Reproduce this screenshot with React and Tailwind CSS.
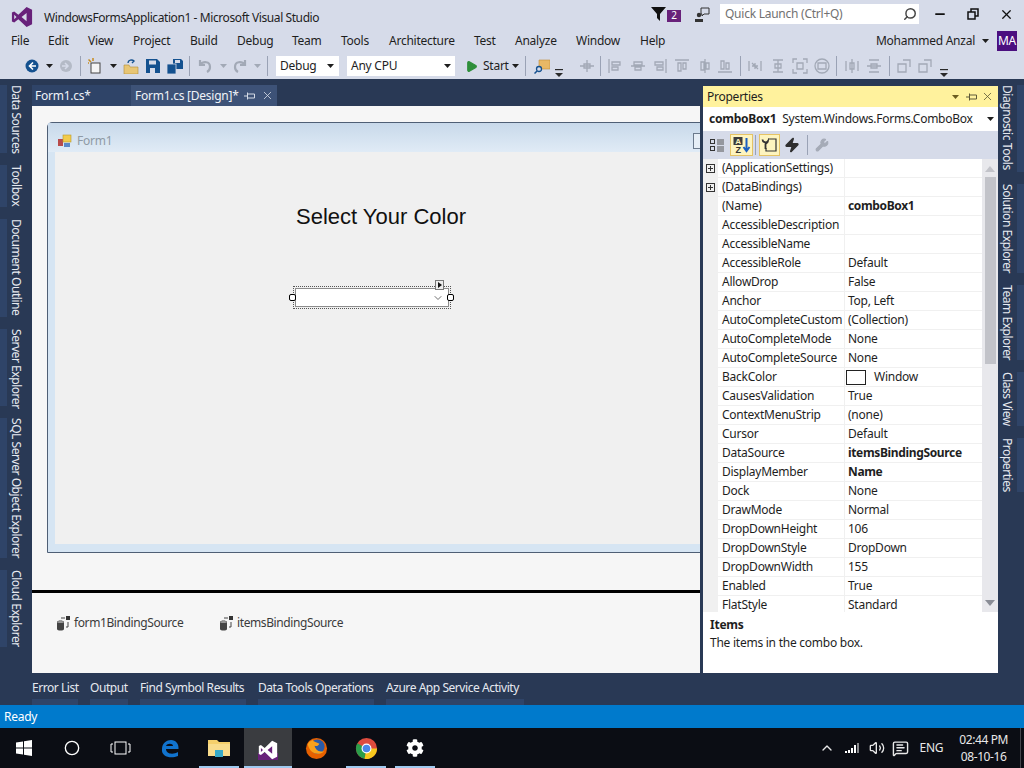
import React from "react";
import { ChevronDown, Search, Minus, X, Circle, Volume2, ChevronUp, MessageSquareText, Play, Zap, Wrench } from "lucide-react";
import { FaCog } from "react-icons/fa";

function VsLogo({ size = 24, fill = "#68217a", hole = "#d6dbe9" }) {
  return (
    <svg width={size} height={size} viewBox="0 0 24 24">
      <path d="M17 1 L23 4 V20 L17 23 L8 14.5 L3.5 18 L1 16.8 V7.2 L3.5 6 L8 9.5 Z" fill={fill} />
      <path d="M17 7.5 L11.5 12 L17 16.5 Z M3.5 9.5 V14.5 L6 12 Z" fill={hole} />
    </svg>
  );
}

function Caret({ c = "#1e1e1e" }) {
  return (
    <svg width="7" height="4" viewBox="0 0 7 4" className="block"><path d="M0 0H7L3.5 4Z" fill={c} /></svg>
  );
}

function PinIcon({ c }) {
  return (
    <svg width="11" height="10" viewBox="0 0 11 10" fill="none" stroke={c} className="block">
      <path d="M0 5H4M3.5 1.5V8.5M3.5 3H10.5V7H3.5" />
    </svg>
  );
}

function Overflow() {
  return (
    <svg width="8" height="9" viewBox="0 0 8 9" className="mt-[12px] block">
      <rect x="0" y="1" width="8" height="1.2" fill="#2a2a2a" />
      <path d="M0 5H8L4 9Z" fill="#2a2a2a" />
    </svg>
  );
}

function Grip() {
  return (
    <div className="h-[20px] w-[5px] bg-[radial-gradient(#9aa0ad_40%,transparent_45%)] bg-[length:2px_2px]" />
  );
}

function Sep() {
  return <div className="h-[20px] w-px bg-[#9aa2b5]" />;
}

function GrayGlyph({ d }) {
  return (
    <svg width="16" height="16" viewBox="0 0 16 16" fill="none" stroke="#a2a9b6" strokeWidth="1.3" className="block">
      <path d={d} />
    </svg>
  );
}

const alignIcons = [
  ["ml-[6px]", "M2 1V15M5 4H13V7H5ZM5 9H11V12H5Z"],
  ["ml-[7px]", "M1 8H15M4 4H12V7H4ZM5 9H11V12H5Z"],
  ["ml-[6px]", "M14 1V15M3 4H11V7H3ZM5 9H11V12H5Z"],
  ["ml-[6px]", "M1 2H15M4 5V13H7V5ZM9 5V11H12V5Z"],
  ["ml-[7px]", "M8 1V15M4 4V12H7V4ZM9 5V11H12V5Z"],
  ["ml-[4px]", "M1 14H15M4 3V11H7V3ZM9 5V11H12V5Z"],
];

const menus = [
  ["File", "w-[37px]"], ["Edit", "w-[40px]"], ["View", "w-[45px]"], ["Project", "w-[57px]"], ["Build", "w-[47px]"],
  ["Debug", "w-[55px]"], ["Team", "w-[49px]"], ["Tools", "w-[48px]"], ["Architecture", "w-[85px]"], ["Test", "w-[41px]"],
  ["Analyze", "w-[61px]"], ["Window", "w-[64px]"], ["Help", "w-[40px]"],
];

const rows = [
  ["(ApplicationSettings)", "", "plus"],
  ["(DataBindings)", "", "plus"],
  ["(Name)", "comboBox1", "bold"],
  ["AccessibleDescription", ""],
  ["AccessibleName", ""],
  ["AccessibleRole", "Default"],
  ["AllowDrop", "False"],
  ["Anchor", "Top, Left"],
  ["AutoCompleteCustom", "(Collection)"],
  ["AutoCompleteMode", "None"],
  ["AutoCompleteSource", "None"],
  ["BackColor", "Window", "swatch"],
  ["CausesValidation", "True"],
  ["ContextMenuStrip", "(none)"],
  ["Cursor", "Default"],
  ["DataSource", "itemsBindingSource", "bold"],
  ["DisplayMember", "Name", "bold"],
  ["Dock", "None"],
  ["DrawMode", "Normal"],
  ["DropDownHeight", "106"],
  ["DropDownStyle", "DropDown"],
  ["DropDownWidth", "155"],
  ["Enabled", "True"],
  ["FlatStyle", "Standard"],
];

function VTab({ label, h, side }) {
  return (
    <div className={`flex ${h} ${side === "left" ? "flex-row" : "flex-row-reverse"}`}>
      <div className="h-full w-[7px] shrink-0 bg-[#2f4468]" />
      <div className={`h-full whitespace-nowrap text-[12px] tracking-[-0.45px] text-[#e6e9f0] [writing-mode:vertical-rl] ${side === "left" ? "w-[18px] leading-[18px]" : "w-[19px] leading-[19px]"}`}>
        {label}
      </div>
    </div>
  );
}

function DbIcon() {
  return (
    <svg width="15" height="15" viewBox="0 0 15 15" className="block">
      <rect x="10" y="0" width="4" height="4" fill="#333" />
      <path d="M5 2H9M12 6V11H10" stroke="#444" fill="none" />
      <path d="M1 6C1 4 8 4 8 6V13C8 15 1 15 1 13Z" fill="#444" />
      <ellipse cx="4.5" cy="6" rx="3.5" ry="1" fill="#999" />
    </svg>
  );
}

function PropToolbarIcons() {
  return (
    <div className="flex h-[28px] items-center bg-[#d6dbe9] pl-[3px]">
      <div className="flex h-[22px] w-[22px] items-center justify-center">
        <svg width="16" height="16" viewBox="0 0 16 16" fill="none" stroke="#333" strokeWidth="1">
          <rect x="1.5" y="2.5" width="4" height="4" /><rect x="1.5" y="9.5" width="4" height="4" />
          <path d="M8 3H15M8 5H15M8 7H15M8 10H15M8 12H15M8 14H15" stroke="#555" />
        </svg>
      </div>
      <div className="ml-[2px] flex h-[22px] w-[23px] items-center justify-center border border-[#e5c365] bg-[#fdf4bf]">
        <svg width="18" height="17" viewBox="0 0 18 17">
          <rect x="0.5" y="0" width="9" height="8" fill="#3c3c3c" />
          <text x="5" y="7" textAnchor="middle" fontSize="8" fontWeight="700" fill="#fdf4bf" fontFamily="Liberation Sans, sans-serif">A</text>
          <text x="5" y="16" textAnchor="middle" fontSize="9" fontWeight="700" fill="#333" fontFamily="Liberation Sans, sans-serif">Z</text>
          <path d="M13.5 1V13M10.5 10L13.5 14L16.5 10" stroke="#1b5fc1" strokeWidth="2" fill="none" />
        </svg>
      </div>
      <div className="ml-[2px] h-[20px] w-px bg-[#9aa2b5]" />
      <div className="ml-[3px] flex h-[22px] w-[21px] items-center justify-center border border-[#e5c365] bg-[#fdf4bf]">
        <svg width="17" height="16" viewBox="0 0 17 16" fill="none" stroke="#333" strokeWidth="1.2">
          <path d="M7 2H15V14H5V11" />
          <path d="M1.5 2.5A3 3 0 0 0 7 4C7 6 5 6 4.5 7V12" strokeWidth="1.8" />
        </svg>
      </div>
      <Zap size={16} className="ml-[4px] fill-[#2f2f2f] text-[#2f2f2f]" />
      <div className="ml-[7px] h-[20px] w-px bg-[#9aa2b5]" />
      <Wrench size={14} className="ml-[7px] fill-[#a5abb7] text-[#a5abb7]" />
    </div>
  );
}

function Properties() {
  return (
    <div className="mt-[7px] flex h-[587px] w-[295px] shrink-0 flex-col overflow-hidden bg-white">
      <div className="flex h-[21px] items-center bg-[#fff29d] pl-[4px] pr-[4px] text-[#1e1e1e]">
        <span className="flex-1 text-[12px]">Properties</span>
        <Caret c="#6b5d20" />
        <div className="ml-[7px]"><PinIcon c="#5e5a38" /></div>
        <X size={13} strokeWidth={1.5} className="ml-[4px] text-[#5e5a38]" />
      </div>
      <div className="flex h-[24px] items-center pl-[6px] pr-[4px] text-[12px] text-[#1e1e1e]">
        <span className="font-bold">comboBox1</span>
        <span className="ml-[6px] flex-1">System.Windows.Forms.ComboBox</span>
        <Caret />
      </div>
      <PropToolbarIcons />
      <div className="flex h-[453px] overflow-hidden">
        <div className="w-[279px] shrink-0">
          {rows.map(([name, value, kind]) => (
            <div key={name} className="flex h-[19px] items-center text-[12px] text-[#1e1e1e]">
              <div className="flex h-full w-[15px] shrink-0 items-center justify-center bg-[#f0f0f0]">
                {kind === "plus" && (
                  <svg width="9" height="9" viewBox="0 0 9 9" fill="none" stroke="#333">
                    <rect x="0.5" y="0.5" width="8" height="8" /><path d="M2 4.5H7M4.5 2V7" />
                  </svg>
                )}
              </div>
              <div className="flex h-full w-[127px] shrink-0 items-center overflow-hidden whitespace-nowrap border-b border-r border-[#f0f0f0] pl-[4px]">
                {name}
              </div>
              <div className={`flex h-full flex-1 items-center whitespace-nowrap border-b border-[#f0f0f0] pl-[3px] ${kind === "bold" ? "font-bold tracking-[-0.35px]" : ""}`}>
                {kind === "swatch" && <span className="ml-[-2px] mr-[8px] h-[15px] w-[20px] border border-[#222] bg-white" />}
                {value}
              </div>
            </div>
          ))}
        </div>
        <div className="flex w-[16px] flex-col items-center bg-[#e8e8ec]">
          <svg width="10" height="6" viewBox="0 0 10 6" className="mt-[7px]"><path d="M0 6L5 0L10 6Z" fill="#c2c3c9" /></svg>
          <div className="mt-[5px] h-[187px] w-[11px] bg-[#c2c3c9]" />
          <div className="flex-1" />
          <svg width="10" height="6" viewBox="0 0 10 6" className="mb-[6px]"><path d="M0 0L5 6L10 0Z" fill="#8a8d96" /></svg>
        </div>
      </div>
      <div className="flex-1 pl-[7px] pt-[4px] text-[12px] text-[#1e1e1e]">
        <div className="font-bold leading-[18px]">Items</div>
        <div className="leading-[18px]">The items in the combo box.</div>
      </div>
    </div>
  );
}

function Designer() {
  return (
    <div className="flex h-[567px] w-[668px] flex-col overflow-hidden bg-[#f6f6f6]">
      <div className="h-[484px] overflow-hidden pl-[15px] pt-[16px]">
        <div className="h-[431px] w-[720px] rounded-t-[5px] border border-[#4f5f75] bg-[#d6e5f3]">
          <div className="flex h-[29px] items-center justify-between bg-gradient-to-b from-[#c8d9ea] to-[#e0ebf6] pl-[10px] pt-[6px]">
            <div className="flex items-center text-[12px] text-[#8f9aa5]">
              <svg width="15" height="14" viewBox="0 0 15 14">
                <rect x="0" y="5" width="5" height="7" fill="#b84a4a" />
                <rect x="5" y="1" width="8" height="7" fill="#f2cb4c" stroke="#b99a2b" strokeWidth=".6" />
                <rect x="6" y="9" width="6" height="4" fill="#5b88c7" />
              </svg>
              <span className="ml-[4px]">Form1</span>
            </div>
            <div className="mr-[53px] h-[16px] w-[20px] border border-[#6b7a8c] bg-[#e6eef6]" />
          </div>
          <div className="mx-[7px] flex h-[392px] flex-col bg-[#f0f0f0] pl-[241px]">
            <div className="mt-[52px] text-[22px] leading-[26px] tracking-normal text-[#111] [font-family:'Liberation_Sans',sans-serif]">Select Your Color</div>
            <div className="relative ml-[-3px] mt-[56px] h-[23px] w-[158px] border border-dotted border-[#555] p-px">
              <div className="flex h-[19px] w-full items-center justify-end border border-[#8c8c8c] bg-white pr-[4px]">
                <ChevronDown size={12} className="text-[#707070]" />
              </div>
              <div className="absolute left-[-5px] top-[7px] h-[7px] w-[7px] rounded-[2px] border border-black bg-white" />
              <div className="absolute right-[-4px] top-[7px] h-[7px] w-[7px] rounded-[2px] border border-black bg-white" />
              <div className="absolute right-[6px] top-[-7px] flex h-[10px] w-[9px] items-center justify-center border border-[#777] bg-[#ededed]">
                <svg width="4" height="6" viewBox="0 0 4 6"><path d="M0 0L4 3L0 6Z" fill="#111" /></svg>
              </div>
            </div>
          </div>
        </div>
      </div>
      <div className="h-[3px] bg-black" />
      <div className="flex flex-1 items-start pl-[24px] pt-[21px] text-[12px] tracking-[-0.4px] text-[#3b3b3b]">
        <div className="flex w-[163px] items-center"><DbIcon /><span className="ml-[3px]">form1BindingSource</span></div>
        <div className="flex items-center"><DbIcon /><span className="ml-[3px]">itemsBindingSource</span></div>
      </div>
    </div>
  );
}

function BottomTab({ label, w }) {
  return (
    <div className={`flex ${w} flex-col`}>
      <div className="flex h-[26px] items-center whitespace-nowrap pt-[3px] text-[12px] tracking-[-0.45px] text-[#e6e9f0]">{label}</div>
      <div className="h-[6px] bg-[#2f4468]" />
    </div>
  );
}

function Firefox() {
  return (
    <svg width="23" height="23" viewBox="0 0 24 24">
      <circle cx="12" cy="12" r="11" fill="#e66000" />
      <circle cx="13" cy="10" r="7.5" fill="#2a5ba8" />
      <path d="M3 8C5 17 14 20 20 15C16 16 11 14 10 9C12 10 14 9 15 7C12 5 9 5 8 3C5 4 3 6 3 8Z" fill="#f9a11b" />
    </svg>
  );
}

function Chrome() {
  return (
    <svg width="23" height="23" viewBox="0 0 24 24">
      <circle cx="12" cy="12" r="11" fill="#dd4b3e" />
      <path d="M12 12L2.5 6.5A11 11 0 0 0 10 22.8Z" fill="#2a9d4a" />
      <path d="M12 12H23A11 11 0 0 1 10 22.8Z" fill="#f7c81e" />
      <circle cx="12" cy="12" r="5.2" fill="#fff" />
      <circle cx="12" cy="12" r="4" fill="#4a87e8" />
    </svg>
  );
}

function TaskItem({ children, active, underline, cls = "" }) {
  return (
    <div className={`relative flex h-full w-[48px] shrink-0 items-center justify-center ${cls} ${active ? "bg-[#3a3c40]" : ""}`}>
      {children}
      {underline && <div className={`absolute bottom-0 h-[2px] bg-[#9fc9ef] ${active ? "w-full" : "w-[40px]"}`} />}
    </div>
  );
}

export default function App() {
  return (
    <div className="flex h-[768px] w-[1024px] flex-col overflow-hidden bg-[#293955] text-[12px] tracking-[-0.25px] [font-family:'Noto_Sans',sans-serif]">
      <div className="flex h-[53px] flex-col bg-[#d6dbe9] text-[#1e1e1e]">
        <div className="flex h-[28px] items-center">
          <div className="ml-[11px] mt-[6px]"><VsLogo size={22} /></div>
          <span className="ml-[11px] mt-[6px] flex-1 whitespace-nowrap pt-px text-[12px] tracking-[-0.41px]">WindowsFormsApplication1 - Microsoft Visual Studio</span>
          <svg width="15" height="14" viewBox="0 0 15 14"><path d="M0 0H15L9 7V14L6 11V7Z" fill="#111" /></svg>
          <div className="ml-px mt-[3px] flex h-[12px] w-[14px] items-center justify-center bg-[#68217a] text-[10px] text-white">2</div>
          <svg width="15" height="15" viewBox="0 0 15 15" className="ml-[14px]">
            <circle cx="4" cy="8" r="2.2" fill="#333" /><path d="M0 15V12H8V15Z" fill="#333" />
            <path d="M6 1H14V7H9L7 9V7H6Z" fill="none" stroke="#333" />
          </svg>
          <div className="ml-[10px] flex h-[20px] w-[199px] items-center justify-between bg-white pl-[5px] pr-[2px] text-[12px] text-[#717171]">
            <span>Quick Launch (Ctrl+Q)</span>
            <Search size={14} strokeWidth={2.5} className="-scale-x-100 text-[#444]" />
          </div>
          <div className="flex w-[105px] items-center pl-[14px]">
            <Minus size={14} strokeWidth={3} className="text-[#111]" />
            <svg width="12" height="12" viewBox="0 0 12 12" fill="none" stroke="#111" strokeWidth="1.5" className="ml-[20px]">
              <rect x="1" y="4" width="7" height="7" /><path d="M4 4V1H11V8H8" />
            </svg>
            <X size={15} strokeWidth={2} className="ml-[20px] text-[#111]" />
          </div>
        </div>
        <div className="flex h-[25px] items-center pl-[11px] pt-px text-[12px]">
          {menus.map(([m, w]) => <div key={m} className={`${w} whitespace-nowrap`}>{m}</div>)}
          <div className="flex-1" />
          <span className="whitespace-nowrap">Mohammed Anzal</span>
          <div className="ml-[7px]"><Caret /></div>
          <div className="ml-[8px] mr-[7px] flex h-[20px] w-[20px] items-center justify-center bg-[#4b0f7f] text-[12px] text-white">MA</div>
        </div>
      </div>

      <div className="flex h-[26px] items-center bg-[#d6dbe9] pl-[12px] text-[12px] text-[#1e1e1e]">
        <Grip />
        <svg width="14" height="14" viewBox="0 0 14 14" className="ml-[8px]">
          <circle cx="7" cy="7" r="6.5" fill="#14518f" />
          <path d="M8 3.5L4.5 7L8 10.5M5 7H11" stroke="#fff" strokeWidth="1.6" fill="none" />
        </svg>
        <div className="ml-[7px]"><Caret /></div>
        <svg width="14" height="14" viewBox="0 0 14 14" className="ml-[6px]">
          <circle cx="7" cy="7" r="6" fill="#b4bac6" />
          <path d="M6 4L9 7L6 10M3 7H9" stroke="#d6dbe9" strokeWidth="1.5" fill="none" />
        </svg>
        <div className="ml-[7px]"><Sep /></div>
        <svg width="16" height="16" viewBox="0 0 16 16" className="ml-[7px]">
          <rect x="3" y="5" width="9" height="10" fill="#f5f5f5" stroke="#444" />
          <path d="M3 4L0.5 1.5M5 3V0M1 5H0" stroke="#c78a1c" strokeWidth="1.5" />
        </svg>
        <div className="ml-[6px]"><Caret /></div>
        <svg width="16" height="15" viewBox="0 0 16 15" className="ml-[6px]">
          <path d="M1 6H6L7 8H15V15H1Z" fill="#e8c675" stroke="#b48f35" strokeWidth=".6" />
          <path d="M5 4C5 1 9 0 11 2L9 4" stroke="#14518f" strokeWidth="1.4" fill="none" />
        </svg>
        <svg width="14" height="14" viewBox="0 0 14 14" className="ml-[7px]">
          <path d="M0 0H11L14 3V14H0Z" fill="#14518f" /><rect x="3" y="1.5" width="7" height="4" fill="#d6dbe9" /><rect x="4" y="9" width="5" height="5" fill="#d6dbe9" />
        </svg>
        <svg width="16" height="15" viewBox="0 0 16 15" className="ml-[7px]">
          <path d="M6 0H14L16 2V10H6Z" fill="#14518f" /><rect x="0" y="5" width="9" height="10" fill="#14518f" stroke="#d6dbe9" strokeWidth=".8" /><rect x="8" y="1" width="5" height="3" fill="#d6dbe9" />
        </svg>
        <div className="ml-[6px]"><Sep /></div>
        <svg width="16" height="16" viewBox="0 0 16 16" fill="none" stroke="#a2a9b6" strokeWidth="2.2" className="ml-[7px]">
          <path d="M3 2V7H8M3 7C6 3 13 3 13 9C13 11 12 13 10 14" />
        </svg>
        <div className="ml-[7px]"><Caret c="#a2a9b6" /></div>
        <svg width="16" height="16" viewBox="0 0 16 16" fill="none" stroke="#a2a9b6" strokeWidth="2.2" className="ml-[5px] -scale-x-100">
          <path d="M3 2V7H8M3 7C6 3 13 3 13 9C13 11 12 13 10 14" />
        </svg>
        <div className="ml-[6px]"><Caret c="#a2a9b6" /></div>
        <div className="ml-[6px]"><Sep /></div>
        <div className="ml-[8px] flex h-[20px] w-[63px] items-center justify-between bg-white pl-[4px] pr-[5px]"><span>Debug</span><Caret /></div>
        <div className="ml-[8px] flex h-[20px] w-[108px] items-center justify-between bg-white pl-[4px] pr-[4px]"><span>Any CPU</span><Caret /></div>
        <Play size={13} className="ml-[10px] fill-[#2f8f3b] text-[#2f8f3b]" />
        <span className="ml-[5px] w-[24px] whitespace-nowrap">Start</span>
        <div className="ml-[5px]"><Caret /></div>
        <div className="ml-[6px]"><Sep /></div>
        <svg width="16" height="16" viewBox="0 0 16 16" className="ml-[8px]">
          <path d="M5 2H16V11H5Z" fill="#e8b866" stroke="#c08d3a" strokeWidth=".6" />
          <circle cx="5" cy="11" r="2.5" fill="#d6dbe9" stroke="#14518f" strokeWidth="1.3" /><path d="M3 13L0.5 15.5" stroke="#14518f" strokeWidth="1.5" />
        </svg>
        <div className="ml-[5px] mr-[4px]"><Overflow /></div>
        <Grip />
        <div className="ml-[7px]"><GrayGlyph d="M1 8H15M8 2V14M5 6H11V10H5Z" /></div>
        <div className="ml-[5px]"><Sep /></div>
        {alignIcons.map(([m, d]) => <div key={d} className={m}><GrayGlyph d={d} /></div>)}
        <div className="ml-[7px]"><Sep /></div>
        <div className="ml-[6px]"><GrayGlyph d="M2 3V13M14 3V13M5 8H11M8 5L8 11M5 5L11 11" /></div>
        <div className="ml-[7px]"><GrayGlyph d="M3 2H13M3 14H13M8 2V14M5 6H11V10H5Z" /></div>
        <div className="ml-[6px]"><GrayGlyph d="M1 5V1H5M11 1H15V5M15 11V15H11M5 15H1V11M5 5H11V11H5Z" /></div>
        <div className="ml-[6px]"><GrayGlyph d="M1 8A7 7 0 0 1 15 8A7 7 0 0 1 1 8M4 5H12V11H4Z" /></div>
        <div className="ml-[6px]"><Sep /></div>
        <div className="ml-[7px]"><GrayGlyph d="M2 3V13M8 1V15M14 3V13M6 5H10V11H6Z" /></div>
        <div className="ml-[6px]"><GrayGlyph d="M3 2H13M1 8H15M3 14H13M5 6H11V10H5Z" /></div>
        <div className="ml-[7px]"><Sep /></div>
        <div className="ml-[6px]"><GrayGlyph d="M2 6H10V14H2ZM7 2H14V9" /></div>
        <div className="ml-[5px]"><GrayGlyph d="M2 6H10V14H2ZM7 2H14V9" /></div>
        <div className="ml-[7px]"><Overflow /></div>
      </div>

      <div className="flex h-[626px]">
        <div className="flex w-[32px] shrink-0 flex-col gap-[12px] pt-[6px]">
          <VTab side="left" h="h-[68px]" label="Data Sources" />
          <VTab side="left" h="h-[42px]" label="Toolbox" />
          <VTab side="left" h="h-[98px]" label="Document Outline" />
          <VTab side="left" h="h-[77px]" label="Server Explorer" />
          <VTab side="left" h="h-[140px]" label="SQL Server Object Explorer" />
          <VTab side="left" h="h-[77px]" label="Cloud Explorer" />
        </div>
        <div className="flex w-[668px] shrink-0 flex-col">
          <div className="flex h-[27px] items-end text-[12px] text-[#f0f3f8]">
            <div className="flex h-[21px] w-[99px] items-center bg-[#2f4468] pl-[3px]">Form1.cs*</div>
            <div className="flex h-[21px] w-[146px] items-center bg-[#3d5277] pl-[4px]">
              <span className="w-[109px] whitespace-nowrap">Form1.cs [Design]*</span>
              <PinIcon c="#d5dbe6" />
              <X size={13} strokeWidth={1.5} className="ml-[6px] text-[#d5dbe6]" />
            </div>
          </div>
          <Designer />
          <div className="flex flex-1 gap-[12px] text-[12px]">
            <BottomTab w="w-[46px]" label="Error List" />
            <BottomTab w="w-[38px]" label="Output" />
            <BottomTab w="w-[106px]" label="Find Symbol Results" />
            <BottomTab w="w-[116px]" label="Data Tools Operations" />
            <BottomTab w="w-[138px]" label="Azure App Service Activity" />
          </div>
        </div>
        <div className="w-[3px] shrink-0" />
        <Properties />
        <div className="flex w-[26px] shrink-0 flex-col gap-[12px] pt-[6px]">
          <VTab side="right" h="h-[87px]" label="Diagnostic Tools" />
          <VTab side="right" h="h-[89px]" label="Solution Explorer" />
          <VTab side="right" h="h-[75px]" label="Team Explorer" />
          <VTab side="right" h="h-[54px]" label="Class View" />
          <VTab side="right" h="h-[54px]" label="Properties" />
        </div>
      </div>

      <div className="flex h-[23px] items-center bg-[#007acc] pl-[4px] text-[12px] text-white">Ready</div>

      <div className="flex h-[40px] items-center bg-[#0b0d14] text-white">
        <TaskItem>
          <svg width="16" height="16" viewBox="0 0 16 16"><path d="M0 2.5L7 1.5V7.5H0ZM8 1.3L16 0V7.5H8ZM0 8.5H7V14.5L0 13.5ZM8 8.5H16V16L8 14.7Z" fill="#fff" /></svg>
        </TaskItem>
        <TaskItem><Circle size={16} strokeWidth={2} /></TaskItem>
        <TaskItem>
          <svg width="21" height="14" viewBox="0 0 21 14" fill="none" stroke="#fff"><rect x="5" y="1" width="11" height="12" /><path d="M3 3H1V11H3M18 3H20V11H18" /></svg>
        </TaskItem>
        <TaskItem cls="ml-[2px]">
          <svg width="22" height="22" viewBox="0 0 22 22" fill="none">
            <path d="M3 12C3 6 8 3 12 3C17 3 20 7 19.5 12H7C7 17 14 18 19 15V19C12 22 2 20 3 12ZM7 9H14C14 6 8 6 7 9Z" fill="#1173ce" />
          </svg>
        </TaskItem>
        <TaskItem cls="ml-px" underline>
          <svg width="22" height="20" viewBox="0 0 22 20">
            <path d="M0 2H9L11 4H22V18H0Z" fill="#f5cf6b" /><path d="M0 6H22V18H0Z" fill="#f9dc8c" /><rect x="7" y="12" width="8" height="7" fill="#38a9c7" />
          </svg>
        </TaskItem>
        <TaskItem cls="ml-px" active underline>
          <div className="relative flex h-[24px] w-[22px] items-end justify-center">
            <div className="absolute bottom-0 h-[7px] w-[20px] bg-[#68217a]" />
            <div className="relative"><VsLogo size={20} fill="#ffffff" hole="#68217a" /></div>
          </div>
        </TaskItem>
        <TaskItem><Firefox /></TaskItem>
        <TaskItem cls="ml-[2px]" underline><Chrome /></TaskItem>
        <TaskItem cls="ml-px" underline><FaCog size={18} /></TaskItem>
        <div className="flex-1" />
        <ChevronUp size={16} className="text-[#e8e8e8]" />
        <svg width="14" height="10" viewBox="0 0 14 10" className="ml-[10px]" fill="#fff">
          <rect x="0" y="8" width="2" height="2" /><rect x="3" y="7" width="2" height="3" /><rect x="6" y="5" width="2" height="5" /><rect x="9" y="2" width="2" height="8" /><rect x="12" y="0" width="2" height="10" opacity=".5" />
        </svg>
        <Volume2 size={16} className="ml-[10px] text-[#e8e8e8]" />
        <MessageSquareText size={17} className="ml-[7px] text-[#e8e8e8]" />
        <span className="ml-[10px] text-[12px] text-[#e8e8e8]">ENG</span>
        <div className="ml-[16px] text-center text-[12px] leading-[17px] tracking-[-0.4px] text-[#e8e8e8]">
          <div>02:44 PM</div>
          <div>08-10-16</div>
        </div>
        <div className="ml-[12px] mr-[3px] h-full w-px bg-[#44464c]" />
      </div>
    </div>
  );
}
